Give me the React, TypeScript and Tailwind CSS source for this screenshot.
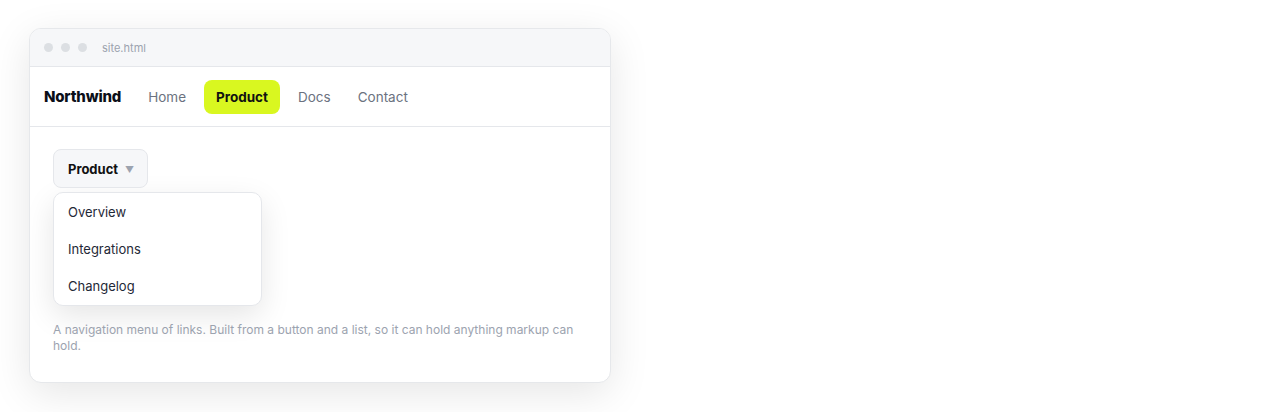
import React from "react";

export default function App() {
  return (
    <div className="w-[1280px] h-[412px] bg-white" style={{ fontFamily: "Inter, 'Noto Sans', sans-serif" }}>
      <div className="pt-[28px] pl-[29px]">
        <div className="w-[582px] h-[355px] rounded-[12px] bg-white border border-[#e6e8eb] shadow-[0_10px_40px_rgba(0,0,0,0.10)] overflow-hidden flex flex-col">
          <div className="h-[38px] bg-[#f6f7f9] border-b border-[#e5e7eb] flex items-center pl-[14px] gap-[8px] shrink-0">
            <span className="w-[9px] h-[9px] rounded-full bg-[#dcdfe3]" />
            <span className="w-[9px] h-[9px] rounded-full bg-[#dcdfe3]" />
            <span className="w-[9px] h-[9px] rounded-full bg-[#dcdfe3]" />
            <span className="ml-[7px] text-[11px] text-[#9ca3af] mt-[1px]">site.html</span>
          </div>
          <div className="h-[60px] border-b border-[#e5e7eb] flex items-center pl-[14px] shrink-0">
            <span className="text-[15px] font-extrabold text-[#0b0f19] tracking-[-0.2px] mt-[2px]">Northwind</span>
            <div className="flex items-center ml-[15px] gap-[6px] mt-[1px]">
              <span className="px-[12px] h-[34px] flex items-center text-[13.5px] text-[#6b7280]">Home</span>
              <span className="px-[12px] h-[34px] flex items-center text-[13.5px] font-bold text-[#111] bg-[#d9f720] rounded-[8px]">Product</span>
              <span className="pl-[12px] pr-[10px] h-[34px] flex items-center text-[13.5px] text-[#6b7280]">Docs</span>
              <span className="pl-[11px] pr-[12px] h-[34px] flex items-center text-[13.5px] text-[#6b7280]">Contact</span>
            </div>
          </div>
          <div className="pl-[23px] pr-[23px] pt-[22px]">
            <div className="inline-flex items-center h-[39px] pt-[2px] pl-[14px] pr-[13px] gap-[7px] bg-[#f6f7f9] border border-[#e5e7eb] rounded-[8px]">
              <span className="text-[13px] font-bold text-[#111]">Product</span>
              <span className="text-[9px] text-[#9ca3af] mt-[1px]">▼</span>
            </div>
            <ul className="mt-[4px] w-[209px] bg-white border border-[#e5e7eb] rounded-[10px] shadow-[0_10px_30px_rgba(0,0,0,0.10)] pt-[1px]">
              <li className="h-[37px] flex items-center px-[14px] text-[13px] text-[#1f2937]">Overview</li>
              <li className="h-[37px] flex items-center px-[14px] text-[13px] text-[#1f2937]">Integrations</li>
              <li className="h-[37px] flex items-center px-[14px] text-[13px] text-[#1f2937]">Changelog</li>
            </ul>
            <p className="mt-[16px] text-[12px] leading-[16px] text-[#9ca3af] pr-[10px]">
              A navigation menu of links. Built from a button and a list, so it can hold anything markup can hold.
            </p>
          </div>
        </div>
      </div>
    </div>
  );
}
